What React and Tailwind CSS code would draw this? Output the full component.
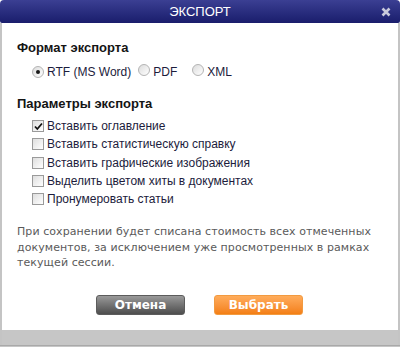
import React from 'react';

const Radio = ({ checked }) => (
  <span className="relative inline-block w-[12px] h-[12px] rounded-full border border-[#b4b4b4] bg-gradient-to-br from-[#dcdcdc] to-[#ffffff]">
    {checked && <span className="absolute left-[3px] top-[3px] w-[4px] h-[4px] rounded-full bg-[#1a1a1a]" />}
  </span>
);

const Check = ({ checked }) => (
  <span className="relative inline-flex items-center justify-center w-[12px] h-[12px] border border-[#9a9a9a] bg-gradient-to-br from-[#dedede] to-[#ffffff]">
    {checked && (
      <svg width="9" height="9" viewBox="0 0 9 9">
        <path d="M1 4.5 L3.3 7 L8 1.5" fill="none" stroke="#111" strokeWidth="1.8" />
      </svg>
    )}
  </span>
);

const OPTIONS = [
  ['Вставить оглавление', true],
  ['Вставить статистическую справку', false],
  ['Вставить графические изображения', false],
  ['Выделить цветом хиты в документах', false],
  ['Пронумеровать статьи', false],
];

export default function App() {
  return (
    <div className="w-[400px] h-[347px] flex flex-col bg-white font-['Liberation_Sans',Arial,sans-serif]">
      {/* Title bar */}
      <div className="relative h-[23px] shrink-0 rounded-t-[4px] rounded-b-[2px] bg-gradient-to-b from-[#3b3f93] to-[#1a1d6c] flex items-center justify-center">
        <span className="text-white text-[13px] leading-none">ЭКСПОРТ</span>
        <svg className="absolute right-[9px] top-[7px]" width="10" height="10" viewBox="0 0 10 10">
          <path d="M1.5 1.5 L8.5 8.5 M8.5 1.5 L1.5 8.5" stroke="#c9cadc" strokeWidth="2.6" />
        </svg>
      </div>

      <div className="flex-1 flex flex-col border-x-[2px] border-[#c4c4c4]">
        <div className="flex-1 pl-[15px] pr-[15px] pt-[17px] text-[#1c1c3c]">
          <div className="text-[13px] font-bold leading-[15px] text-[#141414]">Формат экспорта</div>
          <div className="flex items-center mt-[9px] pl-[15px] text-[12px] leading-[14px]">
            <Radio checked />
            <span className="ml-[3px]">RTF (MS Word)</span>
            <span className="ml-[7px]"><Radio /></span>
            <span className="ml-[3px]">PDF</span>
            <span className="ml-[15px]"><Radio /></span>
            <span className="ml-[3px]">XML</span>
          </div>

          <div className="text-[13px] font-bold leading-[15px] text-[#141414] mt-[17px]">Параметры экспорта</div>
          <div className="flex flex-col gap-[4px] mt-[8px] pl-[15px] text-[12px] leading-[14.3px]">
            {OPTIONS.map(([label, on]) => (
              <div key={label} className="flex items-center">
                <Check checked={on} />
                <span className="ml-[3px]">{label}</span>
              </div>
            ))}
          </div>

          <p className="mt-[18px] text-[11px] leading-[15.5px] text-[#5a5a5a] font-['DejaVu_Sans',Verdana,sans-serif] tracking-[0.07px]">
            При сохранении будет списана стоимость всех отмеченных<br />
            документов, за исключением уже просмотренных в рамках<br />
            текущей сессии.
          </p>

          <div className="flex justify-center gap-[29px] mt-[24px] pr-[1px]">
            <button className="w-[89px] h-[20px] rounded-[3px] border border-[#5c5c5c] bg-gradient-to-b from-[#9a9a9a] to-[#4e4e4e] text-white text-[12px] font-bold font-['DejaVu_Sans',Verdana,sans-serif] leading-none">
              Отмена
            </button>
            <button className="w-[89px] h-[20px] rounded-[3px] border border-[#f29a40] bg-gradient-to-b from-[#ffac5a] to-[#f37f12] text-white text-[12px] font-bold font-['DejaVu_Sans',Verdana,sans-serif] leading-none">
              Выбрать
            </button>
          </div>
        </div>
        <div className="h-[15px] shrink-0 bg-[#c6c6c6]" />
      </div>
      <div className="h-[1px] bg-[#a9a9a9]" />
      <div className="h-[1px] bg-[#c6c6c6]" />
    </div>
  );
}
